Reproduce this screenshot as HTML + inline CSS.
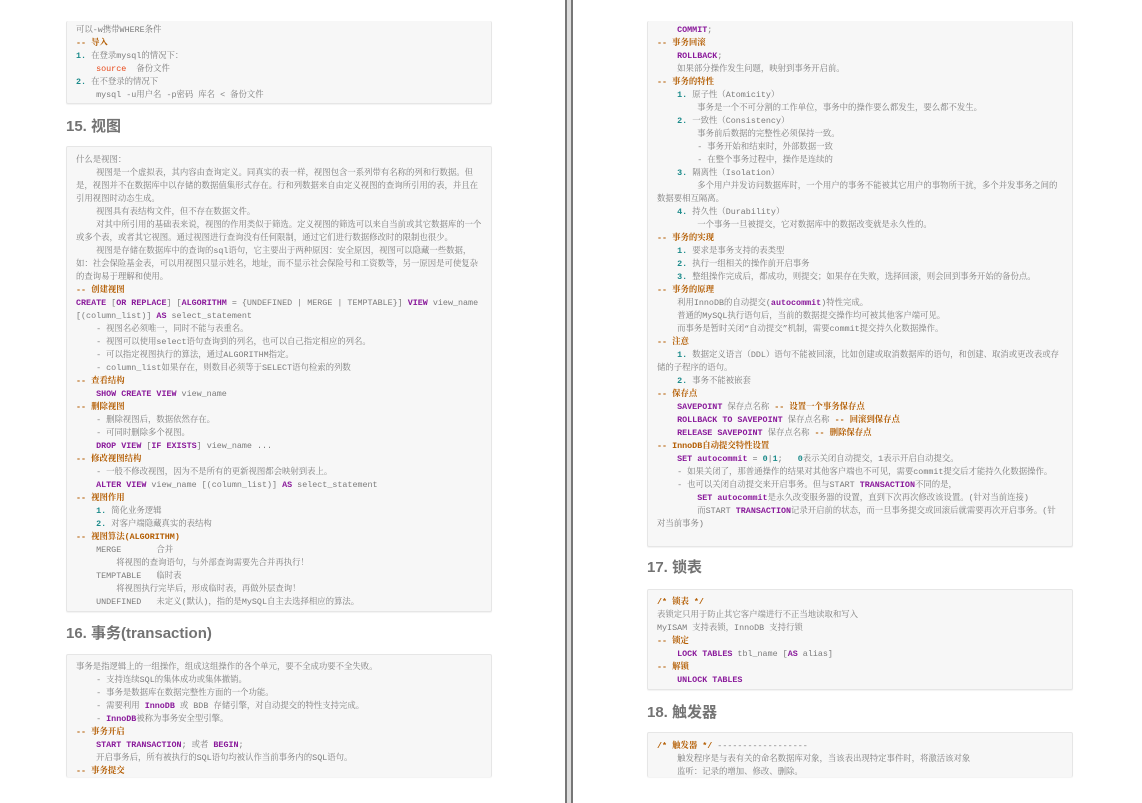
<!DOCTYPE html>
<html><head><meta charset="utf-8">
<style>
*{margin:0;padding:0;box-sizing:border-box}
html,body{width:1142px;height:803px;overflow:hidden;background:#fff}
body{position:relative;font-family:"Liberation Mono","Noto Serif CJK SC",monospace;}
.div{position:absolute;left:565px;top:0;width:8px;height:803px;background:#ddd;border-left:2px solid #777;border-right:2px solid #777}
.box{position:absolute;background:#f7f7f7;border:1px solid #e6e6e6;border-radius:2px;box-shadow:0 1px 1px rgba(0,0,0,.05)}
pre{font-family:"Liberation Mono","Noto Serif CJK SC",monospace;font-size:8.4px;line-height:13px;color:#7c7c7c;white-space:pre}
h2{position:absolute;font-family:"Liberation Sans","Noto Sans CJK SC",sans-serif;font-size:15px;font-weight:bold;color:#737373;line-height:18px}
.c{color:#b35c00;font-weight:bold}
.k{color:#8a1a9b;font-weight:bold}
.n{color:#1a8a8a;font-weight:bold}
.r{color:#e8491a}
</style></head><body>
<div class="div"></div>

<div class="box" style="left:66px;top:21px;width:426px;height:83px;border-top:none;padding:3px 0 0 9px"><pre>可以-w携带WHERE条件
<span class="c">-- 导入</span>
<span class="n">1.</span> 在登录mysql的情况下：
    <span class="r">source</span>  备份文件
<span class="n">2.</span> 在不登录的情况下
    mysql -u用户名 -p密码 库名 &lt; 备份文件</pre></div>

<h2 style="left:66px;top:118px">15. 视图</h2>

<div class="box" style="left:66px;top:146px;width:426px;height:466px;padding:7px 0 0 9px"><pre>什么是视图：
    视图是一个虚拟表，其内容由查询定义。同真实的表一样，视图包含一系列带有名称的列和行数据。但
是，视图并不在数据库中以存储的数据值集形式存在。行和列数据来自由定义视图的查询所引用的表，并且在
引用视图时动态生成。
    视图具有表结构文件，但不存在数据文件。
    对其中所引用的基础表来说，视图的作用类似于筛选。定义视图的筛选可以来自当前或其它数据库的一个
或多个表，或者其它视图。通过视图进行查询没有任何限制，通过它们进行数据修改时的限制也很少。
    视图是存储在数据库中的查询的sql语句，它主要出于两种原因：安全原因，视图可以隐藏一些数据，
如：社会保险基金表，可以用视图只显示姓名，地址，而不显示社会保险号和工资数等，另一原因是可使复杂
的查询易于理解和使用。
<span class="c">-- 创建视图</span>
<span class="k">CREATE</span> [<span class="k">OR REPLACE</span>] [<span class="k">ALGORITHM</span> = {UNDEFINED | MERGE | TEMPTABLE}] <span class="k">VIEW</span> view_name
[(column_list)] <span class="k">AS</span> select_statement
    - 视图名必须唯一，同时不能与表重名。
    - 视图可以使用select语句查询到的列名，也可以自己指定相应的列名。
    - 可以指定视图执行的算法，通过ALGORITHM指定。
    - column_list如果存在，则数目必须等于SELECT语句检索的列数
<span class="c">-- 查看结构</span>
    <span class="k">SHOW CREATE VIEW</span> view_name
<span class="c">-- 删除视图</span>
    - 删除视图后，数据依然存在。
    - 可同时删除多个视图。
    <span class="k">DROP VIEW</span> [<span class="k">IF EXISTS</span>] view_name ...
<span class="c">-- 修改视图结构</span>
    - 一般不修改视图，因为不是所有的更新视图都会映射到表上。
    <span class="k">ALTER VIEW</span> view_name [(column_list)] <span class="k">AS</span> select_statement
<span class="c">-- 视图作用</span>
    <span class="n">1.</span> 简化业务逻辑
    <span class="n">2.</span> 对客户端隐藏真实的表结构
<span class="c">-- 视图算法(ALGORITHM)</span>
    MERGE       合并
        将视图的查询语句，与外部查询需要先合并再执行！
    TEMPTABLE   临时表
        将视图执行完毕后，形成临时表，再做外层查询！
    UNDEFINED   未定义(默认)，指的是MySQL自主去选择相应的算法。</pre></div>

<h2 style="left:66px;top:625px">16. 事务(transaction)</h2>

<div class="box" style="left:66px;top:654px;width:426px;height:123px;border-bottom:none;padding:6px 0 0 9px;overflow:hidden"><pre>事务是指逻辑上的一组操作，组成这组操作的各个单元，要不全成功要不全失败。
    - 支持连续SQL的集体成功或集体撤销。
    - 事务是数据库在数据完整性方面的一个功能。
    - 需要利用 <span class="k">InnoDB</span> 或 BDB 存储引擎，对自动提交的特性支持完成。
    - <span class="k">InnoDB</span>被称为事务安全型引擎。
<span class="c">-- 事务开启</span>
    <span class="k">START TRANSACTION</span>; 或者 <span class="k">BEGIN</span>;
    开启事务后，所有被执行的SQL语句均被认作当前事务内的SQL语句。
<span class="c">-- 事务提交</span></pre></div>

<div class="box" style="left:647px;top:21px;width:426px;height:526px;border-top:none;padding:3px 0 0 9px"><pre>    <span class="k">COMMIT</span>;
<span class="c">-- 事务回滚</span>
    <span class="k">ROLLBACK</span>;
    如果部分操作发生问题，映射到事务开启前。
<span class="c">-- 事务的特性</span>
    <span class="n">1.</span> 原子性（Atomicity）
        事务是一个不可分割的工作单位，事务中的操作要么都发生，要么都不发生。
    <span class="n">2.</span> 一致性（Consistency）
        事务前后数据的完整性必须保持一致。
        - 事务开始和结束时，外部数据一致
        - 在整个事务过程中，操作是连续的
    <span class="n">3.</span> 隔离性（Isolation）
        多个用户并发访问数据库时，一个用户的事务不能被其它用户的事物所干扰，多个并发事务之间的
数据要相互隔离。
    <span class="n">4.</span> 持久性（Durability）
        一个事务一旦被提交，它对数据库中的数据改变就是永久性的。
<span class="c">-- 事务的实现</span>
    <span class="n">1.</span> 要求是事务支持的表类型
    <span class="n">2.</span> 执行一组相关的操作前开启事务
    <span class="n">3.</span> 整组操作完成后，都成功，则提交；如果存在失败，选择回滚，则会回到事务开始的备份点。
<span class="c">-- 事务的原理</span>
    利用InnoDB的自动提交(<span class="k">autocommit</span>)特性完成。
    普通的MySQL执行语句后，当前的数据提交操作均可被其他客户端可见。
    而事务是暂时关闭“自动提交”机制，需要commit提交持久化数据操作。
<span class="c">-- 注意</span>
    <span class="n">1.</span> 数据定义语言（DDL）语句不能被回滚，比如创建或取消数据库的语句，和创建、取消或更改表或存
储的子程序的语句。
    <span class="n">2.</span> 事务不能被嵌套
<span class="c">-- 保存点</span>
    <span class="k">SAVEPOINT</span> 保存点名称 <span class="c">-- 设置一个事务保存点</span>
    <span class="k">ROLLBACK TO SAVEPOINT</span> 保存点名称 <span class="c">-- 回滚到保存点</span>
    <span class="k">RELEASE SAVEPOINT</span> 保存点名称 <span class="c">-- 删除保存点</span>
<span class="c">-- InnoDB自动提交特性设置</span>
    <span class="k">SET autocommit</span> = <span class="n">0</span>|<span class="n">1</span>;   <span class="n">0</span>表示关闭自动提交，1表示开启自动提交。
    - 如果关闭了，那普通操作的结果对其他客户端也不可见，需要commit提交后才能持久化数据操作。
    - 也可以关闭自动提交来开启事务。但与START <span class="k">TRANSACTION</span>不同的是，
        <span class="k">SET autocommit</span>是永久改变服务器的设置，直到下次再次修改该设置。(针对当前连接)
        而START <span class="k">TRANSACTION</span>记录开启前的状态，而一旦事务提交或回滚后就需要再次开启事务。(针
对当前事务)</pre></div>

<h2 style="left:647px;top:559px">17. 锁表</h2>

<div class="box" style="left:647px;top:589px;width:426px;height:101px;padding:6px 0 0 9px"><pre><span class="c">/* 锁表 */</span>
表锁定只用于防止其它客户端进行不正当地读取和写入
MyISAM 支持表锁，InnoDB 支持行锁
<span class="c">-- 锁定</span>
    <span class="k">LOCK TABLES</span> tbl_name [<span class="k">AS</span> alias]
<span class="c">-- 解锁</span>
    <span class="k">UNLOCK TABLES</span></pre></div>

<h2 style="left:647px;top:704px">18. 触发器</h2>

<div class="box" style="left:647px;top:732px;width:426px;height:45px;border-bottom:none;padding:7px 0 0 9px;overflow:hidden"><pre><span class="c">/* 触发器 */</span> ------------------
    触发程序是与表有关的命名数据库对象，当该表出现特定事件时，将激活该对象
    监听：记录的增加、修改、删除。</pre></div>
</body></html>
